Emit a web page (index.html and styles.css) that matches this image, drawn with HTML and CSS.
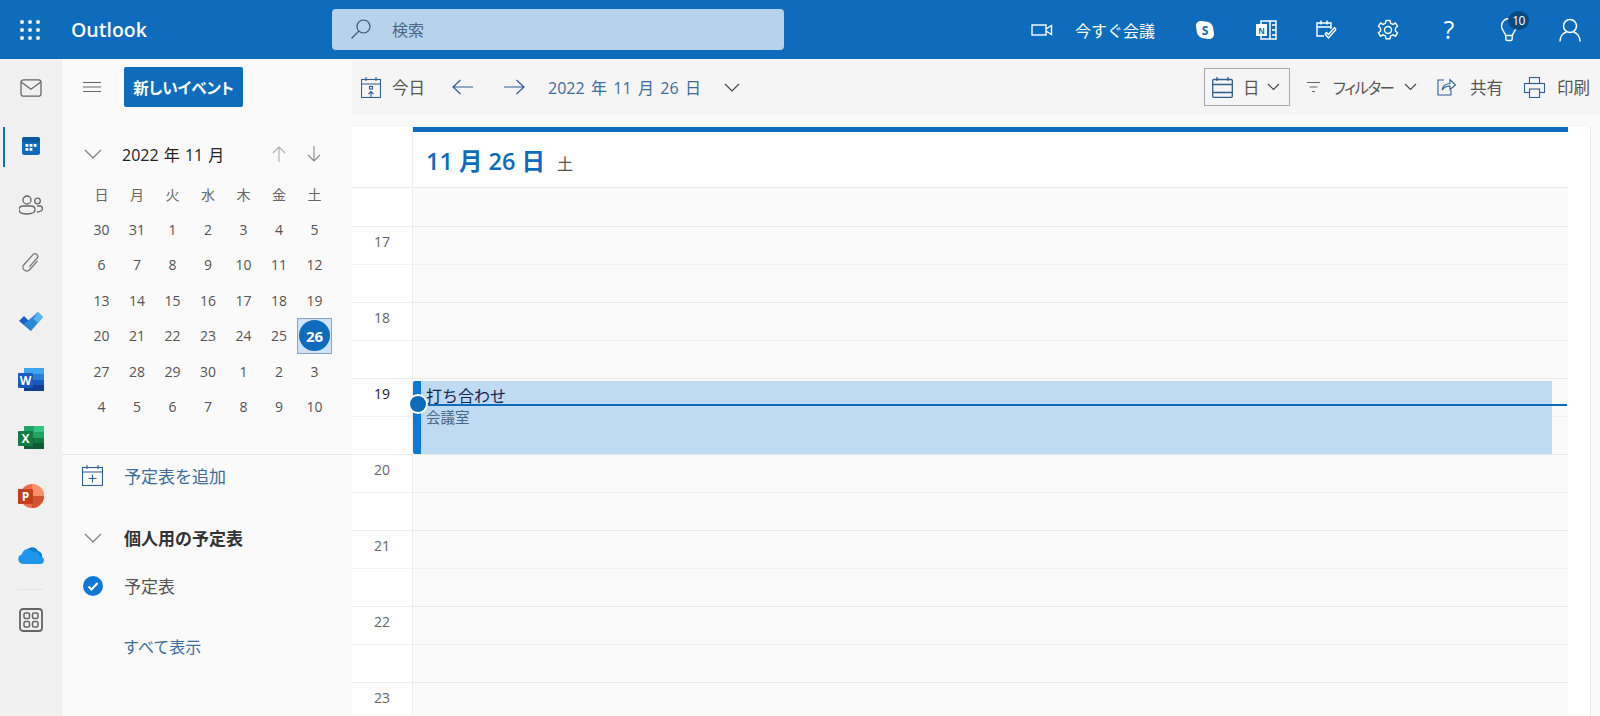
FILE: index.html
```html
<!DOCTYPE html>
<html lang="ja">
<head>
<meta charset="utf-8">
<title>Outlook</title>
<link rel="stylesheet" href="styles.css">
</head>
<body>
<header class="topbar">
  <div class="waffle"><svg width="20" height="20" viewBox="0 0 20 20" fill="#fff"><circle cx="2" cy="2" r="2"/><circle cx="10" cy="2" r="2"/><circle cx="18" cy="2" r="2"/><circle cx="2" cy="10" r="2"/><circle cx="10" cy="10" r="2"/><circle cx="18" cy="10" r="2"/><circle cx="2" cy="18" r="2"/><circle cx="10" cy="18" r="2"/><circle cx="18" cy="18" r="2"/></svg></div>
  <div class="brand">Outlook</div>
  <div class="search">
    <svg width="22" height="22" viewBox="0 0 22 22" fill="none" stroke="#2f5577" stroke-width="1.2"><circle cx="13.5" cy="8.5" r="6.5"/><path d="M8.8 13.2 1.5 20.5"/></svg>
    <span class="search-text">検索</span>
  </div>
  <div class="top-actions">
    <svg class="ta-video" width="22" height="14" viewBox="0 0 22 14" fill="none" stroke="#fff" stroke-width="1.4"><rect x="1" y="2" width="14" height="10"/><path d="M15 6l5.500-3.500v9L15 8"/></svg>
    <span class="ta-meet">今すぐ会議</span>
    <svg class="ta-skype" width="20" height="20" viewBox="0 0 20 20"><path d="M6 1c2 0 3 .6 4 .6C15 1.600 18.400 5 18.400 10c0 1 .6 2 .6 4 0 3-2 5-5 5-2 0-3-.6-4-.6C5 18.400 1.600 15 1.600 10c0-1-.6-2-.6-4 0-3 2-5 5-5z" fill="#fff"/><text x="10" y="14.500" text-anchor="middle" class="sk-t">S</text></svg>
    <svg class="ta-note" width="22" height="20" viewBox="0 0 22 20"><rect x="6" y="1" width="15" height="18" fill="none" stroke="#fff" stroke-width="1.5"/><path d="M15 1v18" stroke="#fff" stroke-width="1.5"/><path d="M17 5h4M17 10h4M17 15h4" stroke="#fff" stroke-width="1.500"/><rect x="1" y="4" width="11" height="12" fill="#fff"/><text x="6.500" y="13.500" text-anchor="middle" class="on-t">N</text></svg>
    <svg class="ta-task" width="22" height="22" viewBox="0 0 22 22" fill="none" stroke="#fff" stroke-width="1.400"><path d="M9 17H2V4h14v6"/><path d="M2 8h14M6 1.500v4M12 1.500v4"/><path d="M10 15l3.500 4L21 10.500"/><path d="M10 15l1.500-1.500 2 2 6-7 1.500 2"/></svg>
    <svg class="ta-gear" width="22" height="22" viewBox="0 0 22 22" fill="none" stroke="#fff" stroke-width="1.400"><circle cx="11" cy="11" r="3.500"/><path d="M9 1.500h4l.6 2.800 2.400 1.100 2.500-1.400 2 3.400-2.100 1.900v2.600l2.100 1.900-2 3.400-2.500-1.400-2.400 1.100-.6 2.800H9l-.6-2.800-2.400-1.100-2.500 1.400-2-3.400 2.100-1.900V9.300L1.500 7.400l2-3.400L6 5.400l2.400-1.100z"/></svg>
    <span class="ta-help">?</span>
    <div class="ta-bulb">
      <svg width="18" height="24" viewBox="0 0 18 24" fill="none" stroke="#fff" stroke-width="1.400"><path d="M5.500 17.500C5 14 1.500 12.500 1.500 8a7.500 7.500 0 0 1 15 0c0 4.500-3.500 6-4 9.500z"/><path d="M5.800 17.500v3.500q0 1.500 1.500 1.500h3.400q1.500 0 1.500-1.500v-3.500"/></svg>
      <span class="badge">10</span>
    </div>
    <svg class="ta-person" width="24" height="24" viewBox="0 0 24 24" fill="none" stroke="#fff" stroke-width="1.500"><circle cx="12" cy="8" r="6.500"/><path d="M2 23.500c0-5 3-8.500 6.500-9.500M22 23.500c0-5-3-8.500-6.500-9.500"/></svg>
  </div>
</header>

<div class="body">
  <nav class="rail">
    <div class="rail-item"><svg width="22" height="18" viewBox="0 0 22 18" fill="none" stroke="#666" stroke-width="1.300"><rect x="1" y=".8" width="20" height="16.400" rx="2.500"/><path d="M1.500 3.300l9.500 7 9.500-7"/></svg></div>
    <div class="rail-item active"><span class="indicator"></span><svg width="18" height="18" viewBox="0 0 18 18"><rect width="18" height="18" rx="2.500" fill="#0f6cbd"/><rect y="0" width="18" height="5" rx="2.500" fill="#0b5a9f"/><g fill="#fff"><rect x="3.500" y="7" width="2.800" height="2.800"/><rect x="7.600" y="7" width="2.800" height="2.800"/><rect x="11.700" y="7" width="2.800" height="2.800"/><rect x="3.500" y="11" width="2.800" height="2.800"/><rect x="7.600" y="11" width="2.800" height="2.800"/></g></svg></div>
    <div class="rail-item"><svg width="24" height="20" viewBox="0 0 24 20" fill="none" stroke="#666" stroke-width="1.300"><circle cx="8" cy="5" r="4"/><circle cx="18.500" cy="6" r="2.800"/><path d="M4 11h8q4 0 4 3.500 0 4.500-8 4.500t-8-4.500Q0 11 4 11z"/><path d="M18 11h3q2.500 0 2.500 2.500 0 3-5.500 3.500"/></svg></div>
    <div class="rail-item"><svg width="20" height="22" viewBox="0 0 20 22" fill="none" stroke="#777" stroke-width="1.300"><path transform="rotate(42 10 11)" d="M13.500 5v12a3.800 3.800 0 0 1-7.600 0V3.500a2.700 2.700 0 0 1 5.400 0V15"/></svg></div>
    <div class="rail-item"><svg width="26" height="20" viewBox="0 0 26 20"><path d="M1 10l5-5 7 7v8z" fill="#1b5fc0"/><path d="M13 20 6 13l14-12 5 5z" fill="#2b88d8"/><path d="M15.500 8 20 1l5 5-5 6z" fill="#5cb4f0"/></svg></div>
    <div class="rail-item"><svg width="26" height="24" viewBox="0 0 26 24"><rect x="6" y="0" width="20" height="23" rx="1" fill="#2b7cd3"/><rect x="6" y="0" width="20" height="6" fill="#41a5ee"/><rect x="6" y="17" width="20" height="6" fill="#103f91"/><rect x="6" y="12" width="20" height="5" fill="#185abd"/><rect y="5" width="15" height="15" rx="1" fill="#185abd"/><text x="7.500" y="16.500" text-anchor="middle" class="logo-t">W</text></svg></div>
    <div class="rail-item"><svg width="26" height="24" viewBox="0 0 26 24"><rect x="6" y="0" width="20" height="23" rx="1" fill="#21a366"/><rect x="16" y="0" width="10" height="6" fill="#33c481"/><rect x="16" y="12" width="10" height="6" fill="#107c41"/><rect x="6" y="12" width="10" height="11" fill="#185c37"/><rect x="16" y="17" width="10" height="6" fill="#0d5c33"/><rect y="5" width="15" height="15" rx="1" fill="#107c41"/><text x="7.500" y="16.500" text-anchor="middle" class="logo-t">X</text></svg></div>
    <div class="rail-item"><svg width="26" height="24" viewBox="0 0 26 24"><circle cx="14" cy="12" r="12" fill="#ed6c47"/><path d="M14 0a12 12 0 0 1 12 12H14z" fill="#ff8f6b"/><path d="M14 12h12a12 12 0 0 1-12 12z" fill="#d35230"/><rect y="5" width="15" height="15" rx="1" fill="#c43e1c"/><text x="7.500" y="16.500" text-anchor="middle" class="logo-t">P</text></svg></div>
    <div class="rail-item"><svg width="26" height="18" viewBox="0 0 26 18"><path d="M7 7a7 7 0 0 1 13-2 5.500 5.500 0 0 1 4 6l-9 2z" fill="#0f78d4"/><path d="M5 18a5 5 0 0 1-1-9.800A6 6 0 0 1 15 6a5 5 0 0 1 7 4.500 4 4 0 0 1 4 3.500 4 4 0 0 1-4 4z" fill="#1e95e8"/></svg></div>
    <div class="rail-sep"></div>
    <div class="rail-item apps"><svg width="24" height="24" viewBox="0 0 24 24" fill="none" stroke="#666" stroke-width="1.500"><rect x="1" y="1" width="22" height="22" rx="3" stroke-width="1.800"/><rect x="5" y="5" width="5.500" height="5.500" rx="1.500"/><rect x="13.500" y="5" width="5.500" height="5.500" rx="1.500"/><rect x="5" y="13.500" width="5.500" height="5.500" rx="1.500"/><rect x="13.500" y="13.500" width="5.500" height="5.500" rx="1.500"/></svg></div>
  </nav>

  <aside class="side">
    <div class="side-top">
      <svg width="20" height="10" viewBox="0 0 20 10" stroke="#666" stroke-width="1"><path d="M1 .5h18M1 5h18M1 9.500h18"/></svg>
      <button class="new-event">新しいイベント</button>
    </div>
    <div class="month-head">
      <svg class="chev" width="18" height="10" viewBox="0 0 18 10" fill="none" stroke="#777" stroke-width="1.100"><path d="M1 1l8 8 8-8"/></svg>
      <span class="month-title">2022 年 11 月</span>
      <svg class="m-up" width="14" height="16" viewBox="0 0 14 16" fill="none" stroke="#aaa" stroke-width="1.100"><path d="M7 16V1M1 7l6-6 6 6"/></svg>
      <svg class="m-down" width="14" height="16" viewBox="0 0 14 16" fill="none" stroke="#888" stroke-width="1.100"><path d="M7 0v15M1 9l6 6 6-6"/></svg>
    </div>
    <div class="mini">
      <span class="dow">日</span><span class="dow">月</span><span class="dow">火</span><span class="dow">水</span><span class="dow">木</span><span class="dow">金</span><span class="dow">土</span>
      <span>30</span><span>31</span><span>1</span><span>2</span><span>3</span><span>4</span><span>5</span>
      <span>6</span><span>7</span><span>8</span><span>9</span><span>10</span><span>11</span><span>12</span>
      <span>13</span><span>14</span><span>15</span><span>16</span><span>17</span><span>18</span><span>19</span>
      <span>20</span><span>21</span><span>22</span><span>23</span><span>24</span><span>25</span><span class="today"><b>26</b></span>
      <span>27</span><span>28</span><span>29</span><span>30</span><span>1</span><span>2</span><span>3</span>
      <span>4</span><span>5</span><span>6</span><span>7</span><span>8</span><span>9</span><span>10</span>
    </div>
    <div class="add-cal">
      <svg width="21" height="21" viewBox="0 0 21 21" fill="none" stroke="#2f5f8f" stroke-width="1.100"><rect x=".5" y="2.500" width="20" height="18"/><path d="M.5 7h20M5 0v4M16 0v4M10.500 9.500v8M6.500 13.500h8"/></svg>
      <span>予定表を追加</span>
    </div>
    <div class="group-head">
      <svg class="chev" width="18" height="10" viewBox="0 0 18 10" fill="none" stroke="#777" stroke-width="1.100"><path d="M1 1l8 8 8-8"/></svg>
      <span>個人用の予定表</span>
    </div>
    <div class="cal-item">
      <svg width="20" height="20" viewBox="0 0 20 20"><circle cx="10" cy="10" r="10" fill="#0f78d4"/><path d="M5.500 10.500l3 3 6-6.500" fill="none" stroke="#fff" stroke-width="2"/></svg>
      <span>予定表</span>
    </div>
    <div class="show-all">すべて表示</div>
  </aside>

  <main class="main">
    <div class="toolbar">
      <svg class="tb-today" width="20" height="21" viewBox="0 0 20 21" fill="none" stroke="#2f5f8f" stroke-width="1.100"><rect x=".5" y="2.500" width="19" height="18"/><path d="M.5 7h19M5 0v4M15 0v4M10 20v-5M7.500 17l2.500-2.500 2.500 2.500"/><rect x="8.500" y="9.500" width="3" height="2.500"/></svg>
      <span class="tb-todaytext">今日</span>
      <svg class="tb-prev" width="21" height="16" viewBox="0 0 21 16" fill="none" stroke="#2f5f8f" stroke-width="1.200"><path d="M21 8H1M8.500 1 1 8l7.500 7"/></svg>
      <svg class="tb-next" width="21" height="16" viewBox="0 0 21 16" fill="none" stroke="#2f5f8f" stroke-width="1.200"><path d="M0 8h20M12.500 1 20 8l-7.500 7"/></svg>
      <span class="tb-date">2022 年 11 月 26 日</span>
      <svg class="tb-chev" width="16" height="9" viewBox="0 0 16 9" fill="none" stroke="#444" stroke-width="1.200"><path d="M1 1l7 7 7-7"/></svg>
      <div class="tb-right">
        <div class="view-btn">
          <svg width="21" height="21" viewBox="0 0 21 21" fill="none" stroke="#2f5f8f" stroke-width="1.300"><rect x=".7" y="2.500" width="19.600" height="17.800" rx="1"/><path d="M.7 7.500h19.600M.7 15.500h19.600M5 0v4M16 0v4"/></svg>
          <span>日</span>
          <svg width="13" height="8" viewBox="0 0 13 8" fill="none" stroke="#444" stroke-width="1.100"><path d="M1 1l5.500 5.500L12 1"/></svg>
        </div>
        <svg class="tb-filter" width="13" height="10" viewBox="0 0 13 10" stroke="#666" stroke-width="1"><path d="M0 .5h13M2.500 5h8M5 9.500h3"/></svg>
        <span class="tb-label filter">フィルター</span>
        <svg class="tb-fchev" width="13" height="8" viewBox="0 0 13 8" fill="none" stroke="#444" stroke-width="1.100"><path d="M1 1l5.500 5.500L12 1"/></svg>
        <svg class="tb-share" width="19" height="18" viewBox="0 0 19 18" fill="none" stroke="#2f5f8f" stroke-width="1.100"><path d="M7 2H1v15h13v-5"/><path d="M5 12q1-6 8-6.500V1.500L18.500 7 13 11.500V8q-5 0-8 4z"/></svg>
        <span class="tb-label share">共有</span>
        <svg class="tb-print" width="21" height="21" viewBox="0 0 21 21" fill="none" stroke="#2f5f8f" stroke-width="1.100"><rect x="5.500" y=".5" width="10" height="6"/><rect x=".5" y="6.500" width="20" height="9"/><rect x="5.500" y="12" width="10" height="8.500" fill="#f5f5f5"/></svg>
        <span class="tb-label print">印刷</span>
      </div>
    </div>
    <div class="cal-area">
      <div class="cal">
        <div class="cal-head">
          <div class="head-gutter"></div>
          <div class="head-day"><span class="head-date">11 月 26 日</span><span class="head-dow">土</span></div>
        </div>
        <div class="rows">
          <div class="row"><div class="t"></div><div class="c"></div></div>
          <div class="row"><div class="t half">17</div><div class="c half"></div></div>
          <div class="row"><div class="t"></div><div class="c"></div></div>
          <div class="row"><div class="t half">18</div><div class="c half"></div></div>
          <div class="row"><div class="t"></div><div class="c"></div></div>
          <div class="row"><div class="t half now">19</div><div class="c half"></div></div>
          <div class="row"><div class="t"></div><div class="c"></div></div>
          <div class="row"><div class="t half">20</div><div class="c half"></div></div>
          <div class="row"><div class="t"></div><div class="c"></div></div>
          <div class="row"><div class="t half">21</div><div class="c half"></div></div>
          <div class="row"><div class="t"></div><div class="c"></div></div>
          <div class="row"><div class="t half">22</div><div class="c half"></div></div>
          <div class="row"><div class="t"></div><div class="c"></div></div>
          <div class="row"><div class="t half">23</div><div class="c half"></div></div>
          <div class="event">
            <div class="ev-title">打ち合わせ</div>
            <div class="ev-sub">会議室</div>
          </div>
          <div class="nowline"></div>
          <div class="nowdot"></div>
        </div>
      </div>
      <div class="strip"></div>
    </div>
  </main>
</div>
</body>
</html>
```
FILE: styles.css
```css
* { box-sizing: border-box; }
html, body { margin: 0; height: 716px; overflow: hidden; }
body { font-family: "Open Sans", "Noto Sans CJK JP", sans-serif; color: #444; background: #fafafa; font-size: 14px; }
svg { display: block; flex: none; }

.topbar { height: 59px; background: #0f6cbd; display: flex; align-items: center; color: #fff; }
.waffle { width: 71px; padding-left: 20px; }
.brand { width: 261px; font-size: 19.500px; font-weight: 600; }
.search { width: 452px; height: 41px; margin-top: -1px; background: #b7d3eb; border-radius: 4px; display: flex; align-items: center; padding-left: 18px; }
.search-text { margin-left: 20px; font-size: 16px; color: #4a6885; }
.top-actions { flex: 1; display: flex; align-items: center; padding-left: 247px; }
.ta-meet { margin-left: 22px; font-size: 16px; }
.ta-skype { margin-left: 40px; }
.sk-t { font: 700 12px "Open Sans", sans-serif; fill: #0f6cbd; }
.on-t { font: 700 8px "Open Sans", sans-serif; fill: #0f6cbd; }
.logo-t { font: 700 12px "Open Sans", sans-serif; fill: #fff; }
.ta-note { margin-left: 40px; }
.ta-task { margin-left: 38px; }
.ta-gear { margin-left: 40px; }
.ta-help { margin-left: 43px; width: 14px; font-size: 25px; font-weight: 400; line-height: 1; text-align: center; }
.ta-bulb { margin-left: 44px; position: relative; }
.badge { position: absolute; left: 8px; top: -7px; width: 21px; height: 19px; border-radius: 50%; background: #0b4a80; color: #fff; font-size: 12px; line-height: 19px; text-align: center; letter-spacing: -.5px; }
.ta-person { margin-left: 40px; }

.body { display: flex; height: 657px; }

.rail { width: 62px; background: #f0f0f0; flex: none; }
.rail-item { height: 58.300px; padding-right: 1px; display: flex; align-items: center; justify-content: center; position: relative; }
.indicator { position: absolute; left: 3px; top: 10px; width: 2px; height: 40px; background: #0f6cbd; }
.rail-sep { width: 26px; height: 1px; background: #e4e4e4; margin: 5px auto 0; }
.apps { margin-top: 1px; }

.side { width: 290px; flex: none; background: #fafafa; }
.side-top { height: 56px; display: flex; align-items: center; padding: 0 0 0 20px; }
.new-event { margin-left: 22px; width: 119px; height: 40px; border: 0; border-radius: 2px; background: #0f6cbd; color: #fff; font: 700 15.500px "Open Sans", "Noto Sans CJK JP", sans-serif; font-feature-settings: "palt"; padding: 0; }
.month-head { height: 61px; padding: 17px 0 0 22px; display: flex; align-items: center; }
.month-title { margin-left: 20px; width: 150px; font-size: 16px; word-spacing: 1px; color: #252423; white-space: nowrap; }
.m-down { margin-left: 21px; }
.mini { margin-left: 21.750px; display: grid; grid-template-columns: repeat(7, 35.500px); grid-auto-rows: 35.500px; height: 277.750px; }
.mini span { display: flex; align-items: center; justify-content: center; font-size: 14px; color: #555; }
.mini .dow { color: #666; }
.mini .today { background: #cfe4f8; border: 1px solid #8ba5bd; }
.today b { width: 31px; height: 31px; border-radius: 50%; background: #0f6cbd; color: #fff; display: flex; align-items: center; justify-content: center; font-size: 15px; font-weight: 700; }
.add-cal { border-top: 1px solid #e6e6e6; height: 43px; display: flex; align-items: center; padding-left: 20px; color: #3f6c9b; font-size: 17px; }
.add-cal span { margin-left: 21px; }
.group-head { margin-top: 17px; height: 48px; display: flex; align-items: center; padding-left: 22px; font-size: 17px; font-weight: 700; color: #333; }
.group-head span { margin-left: 22px; }
.cal-item { margin-top: 1px; height: 46px; display: flex; align-items: center; padding-left: 21px; font-size: 17px; color: #555; }
.cal-item span { margin-left: 21px; }
.show-all { margin-top: 15px; height: 46px; line-height: 46px; padding-left: 61px; font-size: 16px; color: #3f6c9b; }

.main { flex: 1; min-width: 0; background: #fafafa; }
.toolbar { height: 56px; background: #f5f5f5; display: flex; align-items: center; padding-left: 9px; font-size: 16.500px; color: #555; }
.tb-todaytext { margin-left: 11px; width: 34px; white-space: nowrap; }
.tb-prev { margin-left: 26px; }
.tb-next { margin-left: 31px; }
.tb-date { margin-left: 23px; width: 152px; font-size: 16px; word-spacing: 2.200px; color: #3f6c9b; white-space: nowrap; }
.tb-chev { margin-left: 24px; }
.tb-right { margin-left: auto; display: flex; align-items: center; padding-right: 10px; }
.view-btn { width: 86px; height: 38px; border: 1px solid #a8a8a8; display: flex; align-items: center; padding-left: 7px; }
.view-btn span { margin-left: 10px; width: 24px; }
.tb-filter { margin-left: 17px; }
.tb-label { white-space: nowrap; }
.filter { margin-left: 13px; width: 62px; font-size: 15.500px; font-feature-settings: "palt"; letter-spacing: -1.500px; }
.tb-fchev { margin-left: 9px; }
.tb-share { margin-left: 20px; }
.share { margin-left: 14px; width: 33px; }
.tb-print { margin-left: 21px; }
.print { margin-left: 12px; width: 33px; }

.cal-area { margin-top: 12px; display: flex; height: 590px; overflow: hidden; }
.cal { width: 1216px; flex: none; }
.cal-head { height: 61px; display: flex; border-bottom: 1px solid #eaeaea; background: #fff; }
.head-gutter { width: 61px; border-right: 1px solid #eeeeee; }
.head-day { flex: 1; border-top: 5px solid #0f6cbd; padding-left: 13px; padding-top: 11px; white-space: nowrap; }
.head-date { font-size: 23.500px; font-weight: 600; color: #0f6cbd; }
.head-dow { margin-left: 12px; font-size: 16px; color: #555; }
.rows { position: relative; padding-top: 1px; }
.row { display: flex; height: 38px; }
.t { width: 61px; flex: none; background: #fff; border-right: 1px solid #ececec; border-bottom: 1px solid #ececec; text-align: center; color: #666; font-size: 14px; line-height: 30px; }
.t.half { border-bottom-color: #f2f2f2; }
.t.now { color: #222; }
.c { flex: 1; background: #fafafa; border-bottom: 1px solid #e8e8e8; }
.c.half { border-bottom-color: #f1f1f1; }
.event { position: absolute; left: 61px; top: 193px; width: 1139px; height: 73px; background: #bfdaf1; border-left: 8px solid #0f78d4; border-radius: 2px 0 0 2px; padding-left: 5px; }
.ev-title { font-size: 16px; line-height: 20px; margin-top: 5px; color: #14264f; }
.ev-sub { font-size: 14.500px; line-height: 20px; margin-top: 2px; color: #4a6885; }
.nowline { position: absolute; left: 61px; top: 216px; width: 1154px; height: 2px; background: #0f6cbd; }
.nowdot { position: absolute; left: 56px; top: 206px; width: 20px; height: 20px; border-radius: 50%; background: #0f6cbd; border: 2px solid #fff; }
.strip { width: 23px; background: #fff; border-right: 1px solid #e8e8e8; }
```
